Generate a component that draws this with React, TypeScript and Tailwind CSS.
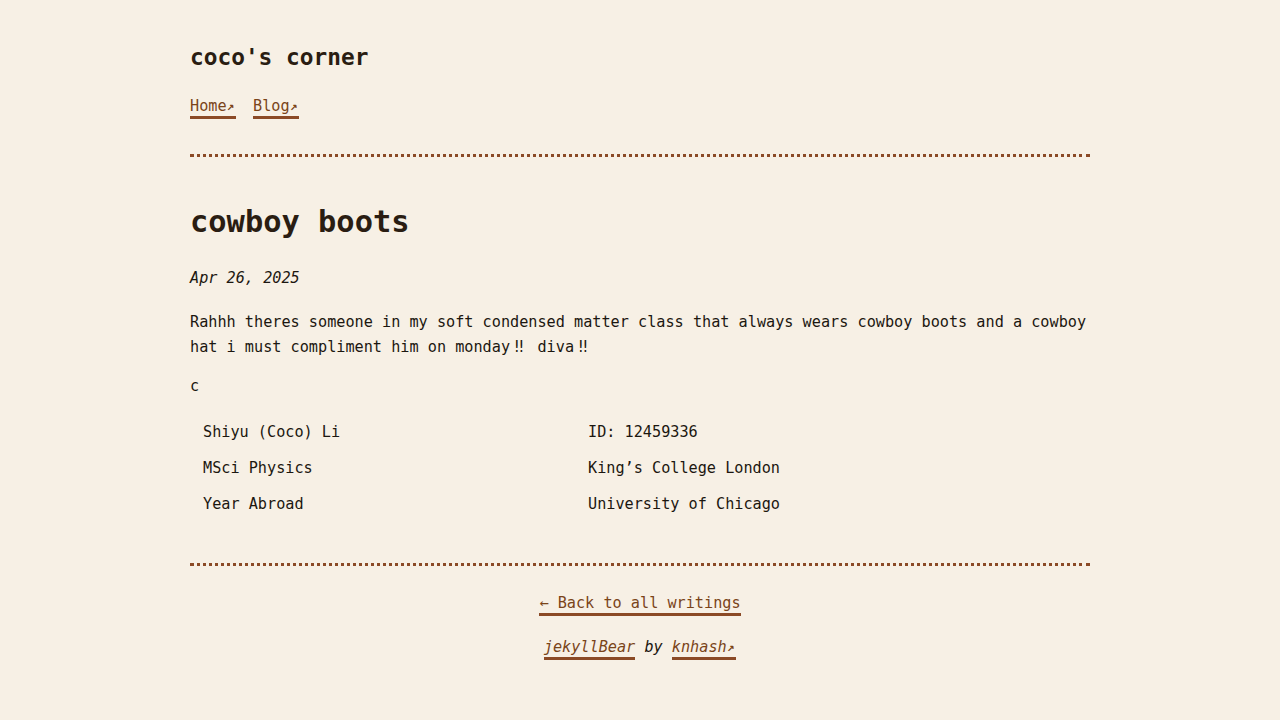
import React from "react";

const font = { fontFamily: '"DejaVu Sans Mono", "Liberation Mono", monospace' };

function Arrow() {
  return <span className="inline-block w-[9.5px] text-[12.5px] font-bold leading-[20px] align-top">↗</span>;
}

function Bang() {
  return <span className="inline-block w-[18.3px] text-center">{"\u203C\uFE0E"}</span>;
}

export default function App() {
  return (
    <div className="min-h-[720px] w-full bg-[#f7f0e5] text-[#1c1710]" style={font}>
      <div className="mx-auto w-[900px] text-[15.2px]">
        <header className="pt-[43px]">
          <div className="text-[22.8px] leading-[28px] font-bold text-[#2a1d12]">coco's corner</div>
          <nav className="mt-[25px] flex gap-[17px] leading-[20px]">
            <a className="inline-block border-b-[3px] border-[#8b4a26] text-[#7a4419]">Home<Arrow /></a>
            <a className="inline-block border-b-[3px] border-[#8b4a26] text-[#7a4419]">Blog<Arrow /></a>
          </nav>
          <div className="mt-[35px] border-t-[3px] border-dotted border-[#8b4a26]" />
        </header>
        <main>
          <h1 className="mt-[47px] text-[30.4px] leading-[36px] font-bold text-[#2a1d12]">cowboy boots</h1>
          <div className="mt-[26px] italic leading-[25px]">Apr 26, 2025</div>
          <p className="mt-[19px] leading-[25px]">
            Rahhh theres someone in my soft condensed matter class that always wears cowboy boots and a cowboy hat i must compliment him on monday<Bang /> diva<Bang />
          </p>
          <p className="mt-[14px] leading-[25px]">c</p>
          <div className="mt-[15px] grid grid-cols-[385px_1fr]">
            {[
              ["Shiyu (Coco) Li", "ID: 12459336"],
              ["MSci Physics", "King’s College London"],
              ["Year Abroad", "University of Chicago"],
            ].map(([a, b]) => (
              <React.Fragment key={a}>
                <div className="h-[36px] flex items-center pl-[13px]">{a}</div>
                <div className="h-[36px] flex items-center pl-[13px]">{b}</div>
              </React.Fragment>
            ))}
          </div>
        </main>
        <footer className="mt-[41px] border-t-[3px] border-dotted border-[#8b4a26] flex flex-col items-center">
          <a className="mt-[27px] inline-block leading-[20px] border-b-[3px] border-[#8b4a26] text-[#7a4419]">← Back to all writings</a>
          <div className="mt-[21px] italic leading-[20px]">
            <a className="inline-block border-b-[3px] border-[#8b4a26] text-[#7a4419]">jekyllBear</a>
            {" by "}
            <a className="inline-block border-b-[3px] border-[#8b4a26] text-[#7a4419]">knhash<Arrow /></a>
          </div>
        </footer>
      </div>
    </div>
  );
}
